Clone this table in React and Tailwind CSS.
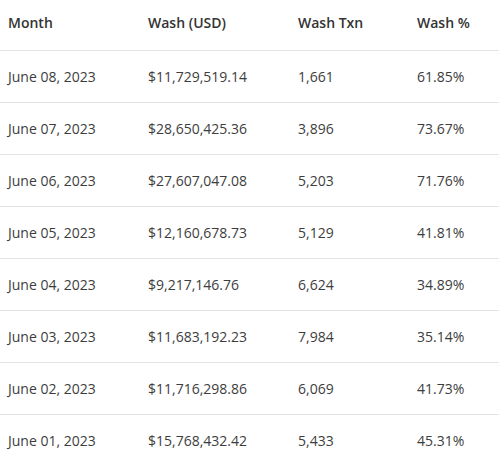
const rows = [
  ['June 08, 2023', '$11,729,519.14', '1,661', '61.85%'],
  ['June 07, 2023', '$28,650,425.36', '3,896', '73.67%'],
  ['June 06, 2023', '$27,607,047.08', '5,203', '71.76%'],
  ['June 05, 2023', '$12,160,678.73', '5,129', '41.81%'],
  ['June 04, 2023', '$9,217,146.76', '6,624', '34.89%'],
  ['June 03, 2023', '$11,683,192.23', '7,984', '35.14%'],
  ['June 02, 2023', '$11,716,298.86', '6,069', '41.73%'],
  ['June 01, 2023', '$15,768,432.42', '5,433', '45.31%'],
];

export default function App() {
  return (
    <div className="w-[500px] h-[459px] overflow-hidden bg-white text-[#3d3d3d] font-['Open_Sans',sans-serif]">
      <table className="w-[499px] border-collapse table-fixed text-[14px]">
        <colgroup>
          <col className="w-[140px]" />
          <col className="w-[150px]" />
          <col className="w-[119px]" />
          <col />
        </colgroup>
        <thead>
          <tr className="h-[50px] border-b border-[#e3e3e3]">
            {['Month', 'Wash (USD)', 'Wash Txn', 'Wash %'].map((h) => (
              <th key={h} className="text-left font-semibold text-[#333] pl-2 pb-[4px] align-middle">
                {h}
              </th>
            ))}
          </tr>
        </thead>
        <tbody>
          {rows.map((r) => (
            <tr key={r[0]} className="h-[52px] border-b border-[#e3e3e3]">
              {r.map((c, i) => (
                <td key={i} className="pl-2 align-middle">
                  {c}
                </td>
              ))}
            </tr>
          ))}
        </tbody>
      </table>
    </div>
  );
}
